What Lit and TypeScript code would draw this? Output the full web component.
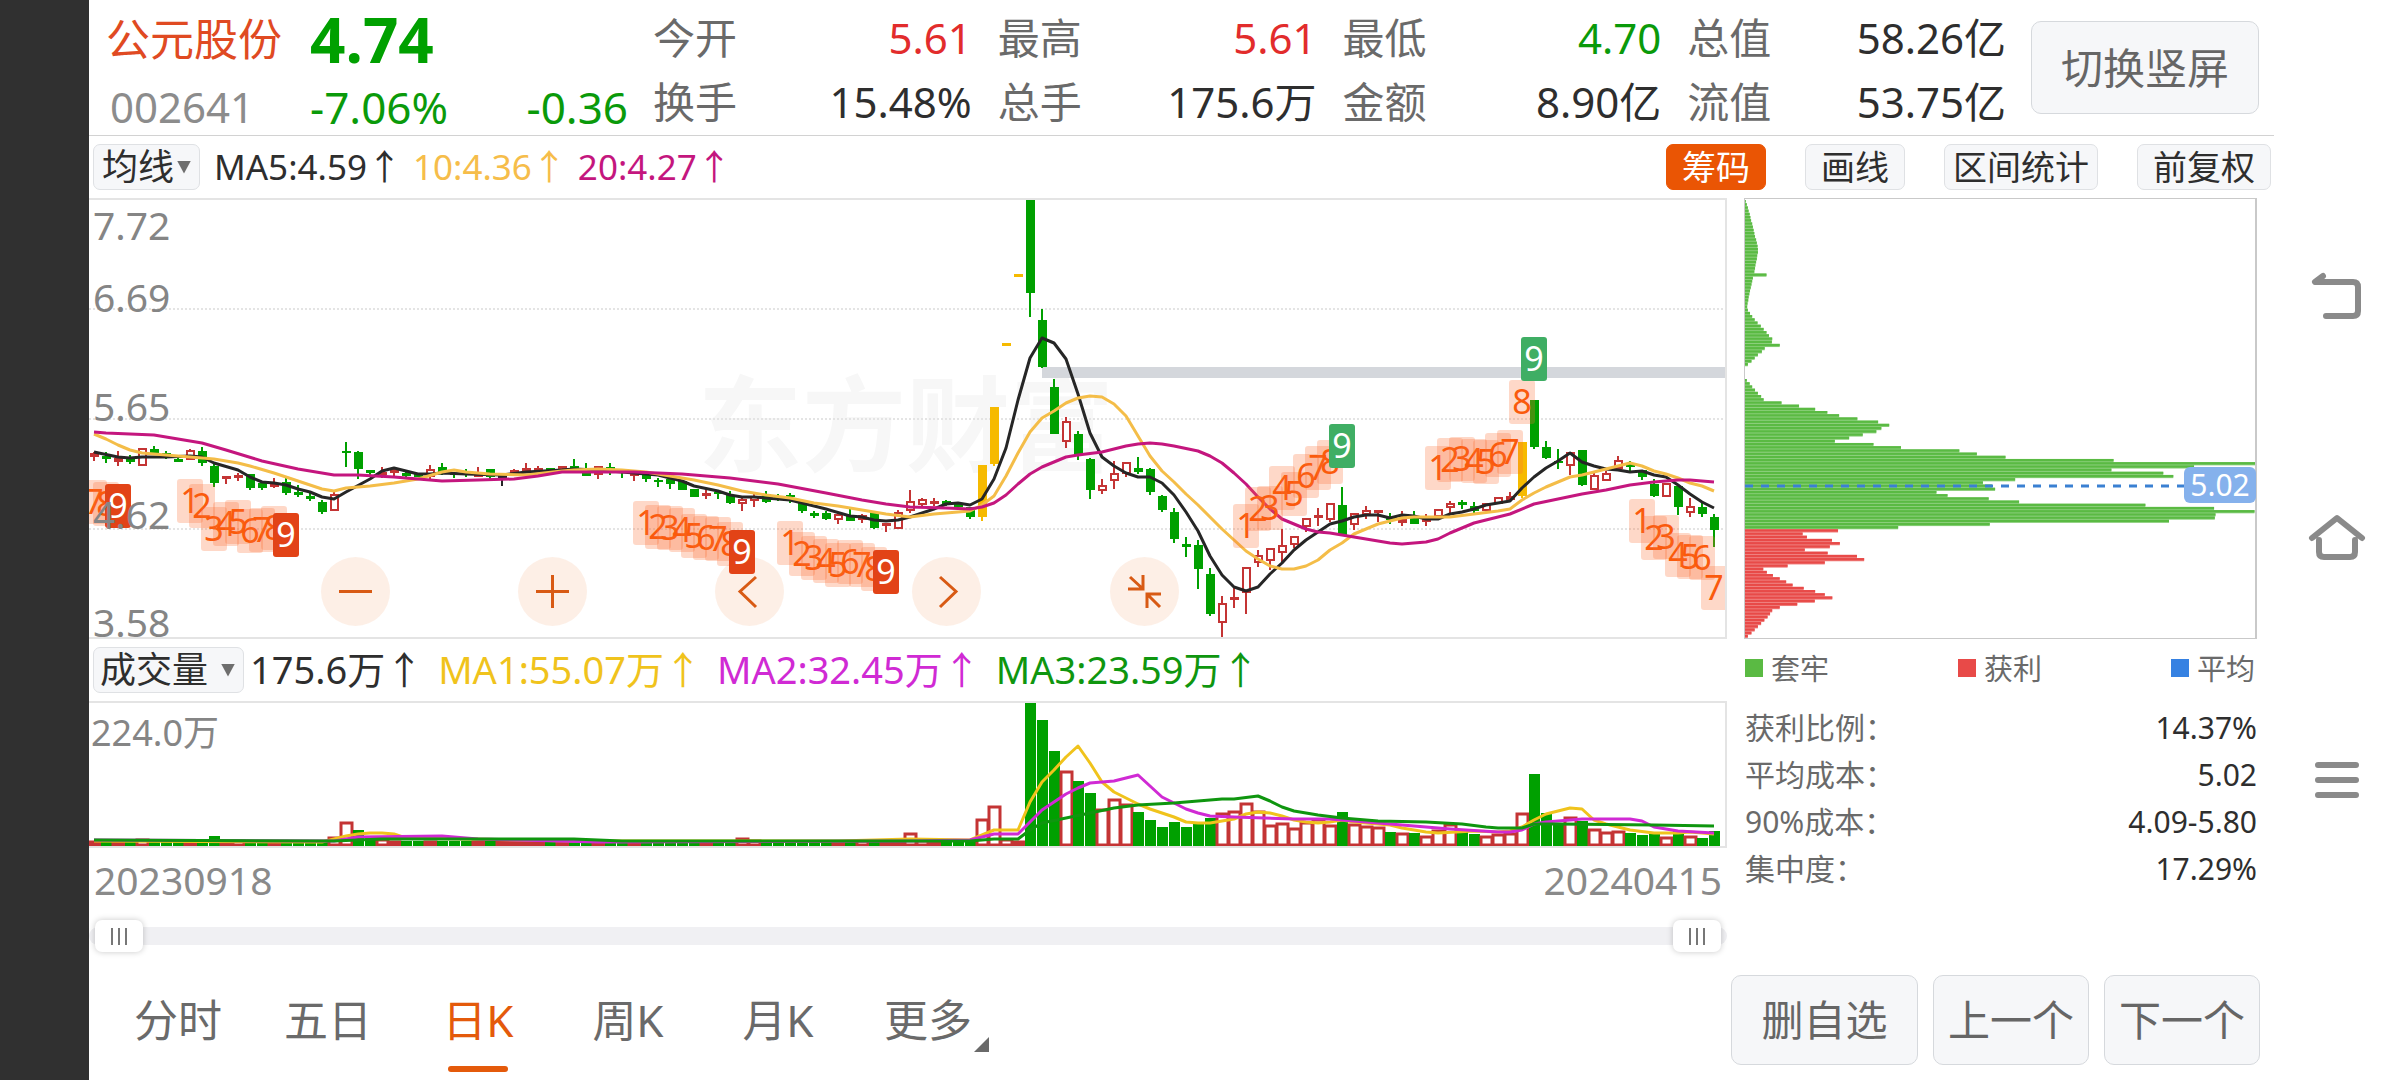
import { LitElement, html, svg, css } from "lit";
import { customElement, state } from "lit/decorators.js";

/* ---------- data ---------- */

type Kind = "g" | "r" | "y" | "k";
/** kind, body top, body bottom, high, low (chart units) */
type Candle = [Kind, number, number, number, number];
type Point = [number, number];

const FIRST_X = 94;
const PITCH = 12;
const cx = (i: number) => FIRST_X + PITCH * i;

const CANDLES: Candle[] = [
  ["r", 453, 457, 452, 461], ["g", 456, 459, 452, 463], ["r", 458, 462, 451, 466], ["g", 459, 462, 455, 464],
  ["r", 448, 466, 448, 466], ["g", 449, 453, 446, 453], ["g", 454, 455, 451, 459], ["g", 459, 461, 458, 461],
  ["r", 450, 460, 449, 460], ["g", 451, 463, 447, 466], ["g", 466, 483, 463, 487], ["r", 476, 479, 476, 484],
  ["r", 475, 478, 473, 481], ["g", 474, 488, 474, 490], ["g", 483, 488, 482, 490], ["r", 483, 487, 478, 488],
  ["g", 482, 493, 478, 495], ["g", 492, 495, 485, 497], ["g", 496, 499, 493, 501], ["g", 502, 512, 500, 514],
  ["r", 494, 511, 492, 511], ["g", 452, 453, 442, 467], ["g", 452, 469, 451, 479], ["g", 470, 472, 470, 475],
  ["r", 472, 475, 467, 478], ["r", 470, 473, 468, 476], ["g", 473, 475, 472, 478], ["g", 473, 477, 473, 477],
  ["r", 469, 477, 465, 479], ["g", 467, 473, 463, 475], ["g", 474, 475, 473, 478], ["g", 474, 475, 469, 477],
  ["r", 474, 476, 467, 477], ["g", 469, 477, 469, 479], ["k", 475, 477, 474, 486], ["r", 470, 474, 469, 475],
  ["r", 468, 470, 463, 471], ["r", 468, 471, 466, 472], ["g", 468, 471, 468, 471], ["r", 466, 469, 466, 470],
  ["g", 466, 468, 459, 468], ["g", 471, 476, 463, 476], ["r", 466, 475, 466, 479], ["g", 467, 473, 463, 475],
  ["g", 472, 473, 471, 478], ["r", 473, 476, 473, 481], ["g", 475, 479, 475, 482], ["g", 481, 482, 478, 487],
  ["g", 479, 484, 479, 489], ["g", 481, 490, 481, 490], ["g", 489, 497, 489, 497], ["r", 493, 495, 489, 499],
  ["g", 493, 494, 492, 499], ["g", 495, 503, 491, 504], ["r", 499, 504, 497, 511], ["r", 496, 501, 494, 507],
  ["g", 494, 502, 491, 503], ["g", 497, 498, 494, 501], ["g", 496, 497, 493, 503], ["g", 501, 511, 501, 513],
  ["g", 513, 515, 511, 518], ["g", 513, 519, 511, 520], ["r", 514, 520, 513, 524], ["g", 516, 521, 509, 521],
  ["r", 515, 520, 514, 523], ["g", 512, 528, 512, 529], ["r", 523, 526, 523, 532], ["r", 512, 529, 510, 529],
  ["r", 501, 511, 490, 513], ["r", 499, 505, 498, 507], ["r", 501, 504, 498, 506], ["g", 501, 504, 500, 506],
  ["g", 503, 507, 503, 507], ["g", 507, 517, 507, 519], ["y", 465, 517, 465, 521], ["y", 407, 464, 407, 466],
  ["y", 343, 346, 343, 346], ["y", 274, 277, 274, 277], ["g", 199, 293, 199, 317], ["g", 320, 367, 309, 368],
  ["g", 387, 434, 379, 434], ["r", 421, 442, 417, 448], ["g", 434, 455, 431, 460], ["g", 459, 490, 458, 499],
  ["r", 485, 491, 479, 494], ["r", 473, 481, 461, 489], ["r", 462, 474, 462, 477], ["g", 468, 472, 457, 474],
  ["g", 469, 492, 468, 495], ["g", 496, 510, 495, 512], ["g", 512, 539, 508, 543], ["g", 544, 547, 537, 557],
  ["g", 545, 569, 540, 589], ["g", 574, 614, 568, 616], ["r", 603, 623, 596, 637], ["r", 597, 599, 587, 608],
  ["r", 567, 593, 567, 614], ["r", 555, 563, 550, 567], ["r", 548, 561, 548, 570], ["r", 545, 553, 529, 562],
  ["r", 536, 545, 536, 548], ["r", 518, 527, 518, 532], ["r", 515, 517, 508, 526], ["r", 503, 520, 503, 522],
  ["g", 505, 535, 487, 535], ["r", 513, 525, 513, 530], ["r", 510, 515, 506, 519], ["r", 510, 513, 510, 522],
  ["g", 517, 519, 513, 524], ["r", 519, 523, 511, 526], ["g", 518, 524, 511, 524], ["r", 519, 522, 514, 526],
  ["r", 509, 517, 509, 517], ["r", 503, 508, 501, 514], ["g", 502, 504, 500, 509], ["g", 506, 511, 502, 515],
  ["r", 503, 511, 503, 511], ["r", 497, 504, 497, 504], ["r", 496, 500, 492, 500], ["y", 442, 496, 442, 498],
  ["g", 400, 447, 400, 449], ["g", 447, 458, 441, 459], ["g", 462, 463, 449, 469], ["r", 452, 466, 452, 475],
  ["g", 450, 485, 450, 486], ["r", 475, 490, 473, 490], ["r", 473, 481, 471, 481], ["r", 460, 469, 456, 469],
  ["g", 464, 466, 461, 471], ["g", 470, 477, 470, 480], ["g", 484, 496, 479, 497], ["r", 483, 497, 483, 497],
  ["g", 486, 507, 486, 515], ["r", 506, 513, 498, 517], ["g", 507, 514, 503, 517], ["g", 517, 530, 514, 547],
];

const MA5: Point[] = [
  [0, 452], [2, 457], [3, 458], [4, 457], [6, 457], [8, 456], [9, 457], [10, 463], [12, 470], [13, 477], [14, 482],
  [15, 483], [16, 485], [17, 489], [18, 492], [19, 497], [20, 499], [21, 492], [23, 479], [24, 471], [25, 468],
  [26, 471], [27, 474], [28, 474], [29, 473], [31, 474], [34, 475], [36, 472], [39, 470], [40, 469], [42, 470],
  [45, 473], [47, 475], [49, 481], [50, 486], [52, 491], [53, 495], [54, 497], [55, 497], [56, 498], [57, 499],
  [58, 500], [59, 503], [61, 509], [63, 516], [64, 517], [65, 520], [66, 521], [67, 520], [68, 517], [70, 509],
  [71, 504], [72, 503], [73, 505], [74, 499], [75, 479], [76, 448], [77, 400], [78, 358], [79, 338], [80, 343],
  [81, 359], [82, 394], [83, 433], [84, 457], [85, 466], [86, 473], [87, 477], [88, 477], [89, 483], [90, 495],
  [91, 512], [92, 531], [93, 556], [94, 575], [95, 587], [96, 591], [97, 587], [98, 574], [99, 563], [100, 550],
  [101, 540], [102, 532], [103, 524], [104, 521], [105, 517], [106, 515], [107, 515], [108, 518], [109, 515],
  [110, 516], [111, 519], [112, 519], [113, 514], [114, 512], [115, 509], [116, 505], [117, 503], [118, 501],
  [119, 488], [120, 477], [121, 468], [122, 461], [123, 453], [124, 462], [125, 466], [126, 469], [127, 470],
  [128, 472], [129, 471], [130, 475], [131, 477], [132, 485], [133, 494], [134, 502], [135, 508],
];
const MA10: Point[] = [
  [0, 434], [1, 439], [2, 445], [3, 450], [4, 453], [5, 454], [8, 457], [10, 459], [12, 463], [13, 466], [15, 473],
  [17, 481], [19, 489], [20, 491], [21, 488], [23, 486], [25, 483], [27, 479], [29, 472], [30, 470], [31, 472],
  [33, 474], [36, 475], [39, 471], [40, 470], [42, 469], [44, 470], [46, 472], [48, 476], [50, 480], [52, 485],
  [54, 491], [56, 495], [58, 498], [60, 503], [62, 506], [64, 510], [66, 514], [68, 517], [70, 514], [72, 512],
  [73, 511], [74, 505], [75, 496], [76, 476], [77, 453], [78, 432], [79, 418], [80, 411], [81, 403], [82, 398],
  [83, 396], [84, 397], [85, 404], [86, 416], [87, 436], [88, 456], [89, 471], [90, 482], [91, 494], [92, 505],
  [93, 517], [94, 529], [95, 540], [96, 551], [97, 559], [98, 566], [99, 569], [100, 569], [101, 566], [102, 560],
  [103, 550], [104, 543], [105, 534], [106, 529], [107, 524], [108, 521], [109, 518], [110, 517], [113, 517],
  [115, 514], [117, 511], [118, 509], [119, 500], [120, 493], [121, 487], [122, 482], [123, 477], [124, 475],
  [126, 469], [128, 463], [129, 466], [130, 471], [131, 474], [132, 478], [133, 483], [134, 486], [135, 491],
];
const MA20: Point[] = [
  [0, 432], [1, 433], [3, 434], [5, 435], [7, 439], [9, 443], [11, 450], [14, 461], [17, 469], [20, 475], [22, 475],
  [25, 477], [29, 481], [32, 480], [35, 479], [37, 476], [39, 472], [45, 472], [49, 474], [53, 478], [57, 484],
  [61, 493], [64, 500], [66, 504], [68, 507], [71, 508], [73, 509], [74, 507], [75, 503], [76, 495], [77, 484],
  [78, 474], [79, 467], [81, 457], [82, 455], [84, 452], [86, 446], [87, 444], [88, 443], [89, 444], [90, 446],
  [92, 451], [93, 456], [94, 463], [95, 473], [96, 484], [97, 497], [98, 509], [99, 519], [100, 524], [101, 529],
  [102, 532], [103, 533], [104, 535], [105, 537], [107, 541], [108, 543], [109, 544], [111, 542], [112, 539],
  [113, 533], [115, 523], [116, 520], [118, 514], [120, 504], [122, 499], [124, 494], [126, 490], [128, 485],
  [130, 482], [132, 480], [133, 480], [135, 482],
];

/** Nine-turn counts: first candle, first digit, top of each badge, colour of a closing nine */
const TURNS: { start: number; first: number; tops: number[]; nine: string }[] = [
  { start: 0, first: 7, tops: [480, 482, 484], nine: "hot" },
  { start: 8, first: 1, tops: [479, 484, 507, 502, 500, 509, 508, 506, 513], nine: "hot" },
  { start: 46, first: 1, tops: [501, 505, 506, 508, 514, 516, 517, 522, 530], nine: "hot" },
  { start: 58, first: 1, tops: [521, 532, 536, 539, 543, 540, 543, 547, 550], nine: "hot" },
  { start: 96, first: 1, tops: [504, 487, 486, 466, 472, 454, 446, 440, 424], nine: "cool" },
  { start: 112, first: 1, tops: [446, 438, 437, 439, 440, 433, 430, 380, 337], nine: "cool" },
  { start: 129, first: 1, tops: [499, 516, 515, 533, 535, 536, 566], nine: "hot" },
];

const VOL_EARLY: Record<number, number> = {
  4: 839, 10: 836, 12: 840, 20: 837, 21: 822, 22: 830, 23: 838, 24: 839, 54: 838, 55: 840, 64: 840, 68: 833, 69: 840,
};
const VOL_LATE = [
  819, 806, 839, 841, 702, 720, 751, 771, 781, 793, 809, 799, 804, 812, 820, 827, 822, 827, 824, 818, 813, 811, 803,
  811, 825, 823, 828, 822, 819, 825, 812, 824, 826, 827, 832, 833, 833, 836, 830, 824, 832, 834, 836, 834, 833, 813,
  774, 813, 823, 817, 821, 829, 832, 831, 833, 835, 834, 837, 830, 836, 838, 831,
];
const volTop = (i: number) => (i >= 74 ? VOL_LATE[i - 74] : VOL_EARLY[i] ?? 841);

/** Days whose volume bar is rising although the candle closed below its open */
const RISING = new Set([21]);

const VMA1: Point[] = [
  [0, 841], [19, 842], [20, 839], [21, 836], [22, 834], [23, 833], [24, 833], [25, 834], [26, 838], [40, 841],
  [62, 841], [68, 839], [73, 840], [75, 830], [77, 830], [78, 802], [79, 782], [80, 770], [81, 757], [82, 746],
  [83, 763], [84, 782], [85, 792], [86, 798], [87, 804], [88, 809], [89, 813], [90, 817], [91, 822], [92, 823],
  [93, 823], [94, 821], [95, 819], [96, 814], [97, 812], [98, 813], [99, 816], [100, 820], [101, 822], [102, 823],
  [103, 822], [104, 820], [105, 822], [108, 825], [109, 828], [111, 832], [112, 833], [115, 831], [117, 832],
  [118, 831], [119, 827], [120, 820], [121, 814], [122, 811], [123, 808], [124, 809], [125, 820], [126, 824],
  [128, 830], [130, 833], [132, 833], [133, 832], [135, 834],
];
const VMA2: Point[] = [
  [0, 840], [20, 841], [22, 837], [29, 836], [30, 837], [32, 839], [42, 842], [68, 841], [73, 840], [75, 834],
  [77, 834], [78, 822], [79, 810], [80, 802], [81, 794], [82, 788], [83, 783], [85, 781], [87, 775], [88, 786],
  [89, 797], [90, 803], [91, 809], [92, 813], [93, 816], [95, 817], [100, 819], [103, 819], [106, 822], [110, 826],
  [113, 829], [117, 832], [118, 832], [119, 830], [120, 824], [121, 822], [124, 819], [128, 819], [129, 821],
  [130, 827], [132, 831], [135, 833],
];
const VMA3: Point[] = [
  [0, 840], [20, 841], [24, 839], [40, 839], [44, 841], [73, 841], [75, 839], [77, 839], [78, 830], [79, 823],
  [81, 818], [83, 813], [85, 808], [87, 805], [90, 803], [92, 801], [94, 799], [95, 799], [97, 796], [98, 801],
  [99, 807], [100, 811], [102, 815], [104, 818], [107, 821], [111, 822], [114, 824], [116, 827], [117, 828],
  [119, 828], [120, 824], [122, 824], [130, 825], [135, 826],
];

/** Share of the widest price level, from the highest price to the lowest */
const CHIPS = [
  2, 5, 8, 10, 13, 15, 17, 20, 22, 24, 26, 28, 31, 33, 35, 36, 36, 34, 33, 31, 29, 28, 26, 60, 22, 20, 18, 16, 14, 12,
  10, 9, 7, 6, 8, 14, 20, 27, 35, 44, 52, 60, 67, 76, 75, 97, 55, 47, 36, 27, 18, 8, 0, 0, 0, 0, 5, 13, 20, 28, 36, 45,
  52, 102, 151, 196, 230, 263, 314, 372, 403, 381, 367, 329, 291, 251, 359, 436, 599, 648, 728, 1030, 1431, 1255, 1024,
  1169, 1197, 755, 665, 690, 699, 535, 566, 681, 766, 1119, 1311, 1424, 1315, 1313, 1185, 684, 428, 260, 161, 173, 243,
  265, 237, 167, 231, 313, 333, 223, 119, 51, 61, 78, 97, 115, 133, 164, 196, 223, 244, 195, 146, 97, 76, 70, 63, 54,
  45, 36, 27, 18, 8,
];
const FIRST_PROFIT = 103;

const line = (pts: Point[]) => pts.map(([i, y]) => `${cx(i)},${y}`).join(" ");

/* ---------- shared styles ---------- */

const base = css`
  *,
  *::before,
  *::after {
    box-sizing: border-box;
  }
  :host {
    display: block;
    font-family: "Noto Sans", "Noto Sans CJK SC", sans-serif;
  }
  svg {
    display: block;
  }
  button,
  select {
    font: inherit;
    color: inherit;
    margin: 0;
    padding: 0;
    border: 0;
    background: none;
    cursor: pointer;
  }
`;

/* ---------- candle chart ---------- */

const VIEW = { x: 89, y: 200, w: 1636, h: 437 };

@customElement("kline-chart")
export class KlineChart extends LitElement {
  static styles = [
    base,
    css`
      .box {
        position: relative;
        height: 441px;
        border: 2px solid #e4e4e4;
        border-left: 0;
        overflow: hidden;
      }
      .layer {
        position: absolute;
        inset: 0;
        width: 100%;
        height: 100%;
      }
      .mark {
        display: flex;
        align-items: center;
        justify-content: center;
        padding-right: 2px;
        font: 700 104px/1 "Noto Sans CJK SC", sans-serif;
        color: #f7f7f7;
      }
      .grid {
        stroke: #e4e4e4;
        stroke-width: 2;
        stroke-dasharray: 2 2;
      }
      .gap {
        fill: #d4d7dc;
      }
      .g {
        fill: #00a000;
        stroke: #00a000;
      }
      .r {
        fill: #fff;
        stroke: #c43434;
      }
      .y {
        fill: #f6ba00;
        stroke: #f6ba00;
      }
      .k {
        fill: #262626;
        stroke: #262626;
      }
      .wick {
        stroke-width: 2;
      }
      .body {
        stroke-width: 2;
      }
      .ma {
        fill: none;
        stroke-width: 3;
        stroke-linejoin: round;
      }
      .ma5 {
        stroke: #262626;
      }
      .ma10 {
        stroke: #f4bd48;
      }
      .ma20 {
        stroke: #c4167e;
      }
      .turn {
        position: absolute;
        width: 26px;
        height: 44px;
        margin-left: -13px;
        border-radius: 3px;
        font-size: 34px;
        line-height: 43px;
        text-align: center;
        display: flex;
        justify-content: center;
        color: #fa5a0c;
        background: rgba(252, 110, 50, 0.27);
      }
      .hot {
        color: #fff;
        background: #e24317;
      }
      .cool {
        color: #fff;
        background: #3fae64;
      }
      .axis {
        display: grid;
        grid-template-rows: repeat(4, 1fr);
        padding: 4px 0 0 4px;
        font-size: 39px;
        line-height: 30px;
        color: #858585;
      }
      .band {
        display: flex;
        flex-direction: column;
        justify-content: flex-end;
      }
      .first {
        justify-content: space-between;
        padding-top: 6px;
      }
      .tools {
        position: absolute;
        left: 14.2%;
        right: 33.4%;
        bottom: 11px;
        display: flex;
        justify-content: space-between;
      }
      .tool {
        width: 69px;
        height: 69px;
        border-radius: 50%;
        background: rgba(253, 236, 226, 0.85);
      }
      .tool svg {
        width: 69px;
        height: 69px;
        fill: none;
        stroke: #d85a14;
        stroke-width: 3;
      }
    `,
  ];

  private candle([k, top, bottom, high, low]: Candle, i: number) {
    const x = cx(i);
    const thin = bottom - top < 2;
    return svg`<g class=${k}>
      ${high < top ? svg`<line class="wick" x1=${x} x2=${x} y1=${high} y2=${top} />` : ""}
      ${low > bottom ? svg`<line class="wick" x1=${x} x2=${x} y1=${bottom} y2=${low} />` : ""}
      ${thin
        ? svg`<line class="wick" x1=${x - 4} x2=${x + 5} y1=${top} y2=${top} />`
        : svg`<rect class="body" x=${x - 3} y=${top + 1} width="7" height=${Math.max(1, bottom - top - 2)} />`}
    </g>`;
  }

  private badges() {
    return TURNS.flatMap(({ start, first, tops, nine }) =>
      tops.map((top, n) => {
        const digit = first + n;
        const left = ((cx(start + n) - VIEW.x) / VIEW.w) * 100;
        const y = ((top - VIEW.y) / VIEW.h) * 100;
        return html`<span class="turn ${digit === 9 ? nine : ""}" style="left:${left}%;top:${y}%">${digit}</span>`;
      })
    );
  }

  render() {
    const icons: [string, string][] = [
      ["缩小", "M18 34.5H51"],
      ["放大", "M18 34.5H51M34.5 18V51"],
      ["左移", "M41 20L25 34.5L41 50"],
      ["右移", "M28 20L44 34.5L28 50"],
      ["收起", "M33 18V32H18M20 20L33 32M51 37H37V51M37 37L50 50"],
    ];
    return html`<div class="box">
      <div class="layer mark" aria-hidden="true">东方财富</div>
      <svg class="layer" viewBox="${VIEW.x} ${VIEW.y} ${VIEW.w} ${VIEW.h}" preserveAspectRatio="none">
        ${[309, 419, 529].map((y) => svg`<line class="grid" x1="89" x2="1725" y1=${y} y2=${y} />`)}
        <rect class="gap" x="1042" y="367" width="684" height="11" />
        ${CANDLES.map((c, i) => this.candle(c, i))}
        <polyline class="ma ma5" points=${line(MA5)} />
        <polyline class="ma ma10" points=${line(MA10)} />
        <polyline class="ma ma20" points=${line(MA20)} />
      </svg>
      <div class="tools">
        ${icons.map(
          ([name, d]) => html`<button class="tool" aria-label=${name}>
            <svg viewBox="0 0 69 69"><path d=${d} /></svg>
          </button>`
        )}
      </div>
      <div class="layer" style="pointer-events:none">${this.badges()}</div>
      <div class="layer axis" style="pointer-events:none">
        <div class="band first"><span>7.72</span><span>6.69</span></div>
        <div class="band">5.65</div>
        <div class="band">4.62</div>
        <div class="band">3.58</div>
      </div>
    </div>`;
  }
}

/* ---------- volume chart ---------- */

@customElement("volume-chart")
export class VolumeChart extends LitElement {
  static styles = [
    base,
    css`
      .box {
        position: relative;
        height: 147px;
        border: 2px solid #e4e4e4;
        border-left: 0;
        overflow: hidden;
      }
      .plot {
        position: absolute;
        inset: 0;
        width: 100%;
        height: 100%;
      }
      .g {
        fill: #00a000;
      }
      .r {
        fill: #fff;
        stroke: #c43434;
        stroke-width: 3;
      }
      .ma {
        fill: none;
        stroke-width: 3;
        stroke-linejoin: round;
      }
      .v1 {
        stroke: #f0c31c;
      }
      .v2 {
        stroke: #d02ad4;
      }
      .v3 {
        stroke: #0f960f;
      }
      .peak {
        padding: 6px 0 0 2px;
        font-size: 36px;
        line-height: 48px;
        color: #858585;
        position: relative;
      }
    `,
  ];

  render() {
    return html`<div class="box">
      <svg class="plot" viewBox="89 703 1636 143" preserveAspectRatio="none">
        ${CANDLES.map(([k], i) => {
          const top = volTop(i);
          return k === "g" && !RISING.has(i)
            ? svg`<rect class="g" x=${cx(i) - 5} y=${top} width="11" height=${846 - top} />`
            : svg`<rect class="r" x=${cx(i) - 5} y=${top + 1} width="11" height=${844 - top} />`;
        })}
        <polyline class="ma v1" points=${line(VMA1)} />
        <polyline class="ma v2" points=${line(VMA2)} />
        <polyline class="ma v3" points=${line(VMA3)} />
      </svg>
      <div class="peak">224.0万</div>
    </div>`;
  }
}

/* ---------- chip distribution ---------- */

@customElement("chip-chart")
export class ChipChart extends LitElement {
  static styles = [
    base,
    css`
      .box {
        position: relative;
        height: 441px;
        border: 1px solid #c9c9c9;
        border-right-width: 2px;
      }
      .plot {
        position: absolute;
        inset: 0;
        width: 100%;
        height: 100%;
      }
      .loss {
        fill: #5aba43;
      }
      .gain {
        fill: #e84a48;
      }
      .avg {
        stroke: #3a80d2;
        stroke-width: 3;
        stroke-dasharray: 8 8;
      }
      .tag {
        position: absolute;
        right: -1px;
        top: 61%;
        width: 72px;
        height: 36px;
        border-radius: 6px;
        background: #85b1ec;
        color: #fff;
        font-size: 30px;
        line-height: 36px;
        text-align: center;
      }
    `,
  ];

  render() {
    const step = 438 / 137;
    return html`<div class="box">
      <svg class="plot" viewBox="0 0 510 439" preserveAspectRatio="none">
        ${CHIPS.map((v, i) => {
          const kind = i >= FIRST_PROFIT ? "gain" : "loss";
          const w = v * (512 / 1431);
          return svg`<rect class=${kind} opacity="0.7" x="0" y=${1 + i * step} width=${w} height=${step} />
            <rect class=${kind} x="0" y=${1 + i * step} width=${w} height=${step * 0.72} />`;
        })}
        <line class="avg" x1="0" x2="440" y1="287" y2="287" />
      </svg>
      <span class="tag">5.02</span>
    </div>`;
  }
}

/* ---------- page ---------- */

@customElement("app-root")
export class AppRoot extends LitElement {
  static styles = [
    base,
    css`
      .screen {
        display: grid;
        grid-template-columns: 89px minmax(0, 1fr) 126px;
        min-height: 100vh;
        background: #fff;
        color: #2e2e2e;
      }
      .notch {
        background: #303030;
      }
      .row {
        display: flex;
        align-items: center;
      }

      /* quote header */
      .head {
        display: flex;
        align-items: center;
        height: 136px;
        padding: 0 15px 0 17px;
        border-bottom: 1px solid #d2d2d2;
      }
      .quote {
        display: grid;
        grid-template-columns: 204px 318px;
        grid-template-rows: 78px 57px;
        align-items: center;
        line-height: 1;
        color: #0a9a0a;
      }
      .name {
        font-size: 44px;
        color: #e04a22;
      }
      .code {
        font-size: 42px;
        padding-left: 4px;
        color: #8c8c8c;
      }
      .price {
        font-size: 62px;
        line-height: 78px;
        font-weight: 700;
        color: #00a000;
      }
      .change {
        display: flex;
        justify-content: space-between;
        font-size: 44px;
      }
      .stats {
        flex: 1;
        display: grid;
        grid-template-columns: repeat(4, 1fr);
        grid-template-rows: 64px 64px;
        column-gap: 26px;
        margin: 0 25px;
        padding-top: 4px;
        font-size: 42px;
      }
      .stat {
        display: flex;
        justify-content: space-between;
        align-items: center;
        line-height: 1;
      }
      .label {
        color: #6a6a6a;
      }
      .up {
        color: #e22c2c;
      }
      .down {
        color: #0a9a0a;
      }
      .btn {
        border: 1px solid #d6d9dd;
        border-radius: 10px;
        background: #f6f7f9;
        font-size: 42px;
        line-height: 1;
        color: #666;
        white-space: nowrap;
      }
      .rotate {
        width: 228px;
        height: 93px;
      }

      /* indicator bar */
      .bar {
        height: 62px;
        padding-left: 4px;
        line-height: 1;
        white-space: nowrap;
      }
      .pick {
        display: flex;
        align-items: center;
        height: 46px;
        border: 1px solid #dfe1e4;
        border-radius: 7px;
        background: #f6f7f9;
        font-size: 36px;
      }
      .pick select {
        appearance: none;
        line-height: 42px;
        height: 42px;
        outline: 0;
      }
      .caret {
        width: 14px;
        height: 13px;
        background: #6e6e6e;
        clip-path: polygon(0 0, 100% 0, 50% 100%);
        pointer-events: none;
      }
      .pick-ma {
        padding: 0 8px;
        gap: 2px;
        margin-right: 14px;
      }
      .pick-vol {
        padding: 0 8px 0 6px;
        gap: 12px;
        margin-right: 6px;
      }
      .averages {
        display: flex;
        gap: 11px;
        padding-bottom: 3px;
        font-size: 35px;
      }
      .volumes {
        gap: 15px;
        font-size: 38px;
      }
      .arrow {
        font-family: "Noto Sans CJK SC", sans-serif;
      }
      .c-yellow {
        color: #f6bd4a;
      }
      .c-pink {
        color: #c4167e;
      }
      .c-gold {
        color: #f0c31c;
      }
      .c-violet {
        color: #d02ad4;
      }
      .c-green {
        color: #0f960f;
      }
      .modes {
        margin-left: auto;
        padding-right: 3px;
        display: flex;
        gap: 39px;
      }
      .mode {
        height: 46px;
        padding: 0 15px;
        border: 1px solid #dfe1e4;
        border-radius: 7px;
        background: #f6f7f9;
        font-size: 34px;
        line-height: 1;
      }
      .mode.wide {
        padding: 0 8px;
      }
      .mode.on {
        border-color: #ea5504;
        background: #ea5504;
        color: #fff;
      }

      /* charts */
      .columns {
        display: grid;
        grid-template-columns: minmax(0, 1638fr) minmax(0, 513fr);
        column-gap: 17px;
        padding-right: 17px;
      }
      .dates {
        display: flex;
        justify-content: space-between;
        align-items: center;
        height: 66px;
        padding: 0 5px 4px;
        font-size: 39px;
        line-height: 1;
        color: #8a8a8a;
      }
      .range {
        position: relative;
        height: 44px;
        display: flex;
        align-items: center;
      }
      .track {
        flex: 1;
        height: 18px;
        border-radius: 9px;
        background: #f0f0f3;
      }
      .range input {
        position: absolute;
        inset: 0 6px;
        width: calc(100% - 12px);
        height: 44px;
        margin: 0;
        appearance: none;
        background: none;
        pointer-events: none;
      }
      .range input::-webkit-slider-thumb {
        appearance: none;
        pointer-events: auto;
        width: 48px;
        height: 32px;
        border-radius: 7px;
        border: 0;
        background:
          linear-gradient(#777, #777) 16px center / 2px 17px no-repeat,
          linear-gradient(#777, #777) 23px center / 2px 17px no-repeat,
          linear-gradient(#777, #777) 30px center / 2px 17px no-repeat,
          #fff;
        box-shadow: 0 0 6px rgba(0, 0, 0, 0.22);
      }

      /* chip panel */
      .legend {
        display: flex;
        justify-content: space-between;
        align-items: center;
        height: 60px;
        padding: 0 2px 2px 1px;
        font-size: 29px;
        line-height: 1;
        color: #6a6a6a;
      }
      .key {
        display: flex;
        align-items: center;
        gap: 8px;
      }
      .swatch {
        width: 18px;
        height: 18px;
      }
      .s-green {
        background: #5aba43;
      }
      .s-red {
        background: #e84a48;
      }
      .s-blue {
        background: #3581e2;
      }
      .facts {
        width: 100%;
        margin-top: 5px;
        border-collapse: collapse;
        font-size: 30px;
        line-height: 47px;
      }
      .facts th {
        padding: 0 0 0 1px;
        font-weight: 400;
        text-align: left;
        color: #6a6a6a;
      }
      .facts td {
        padding: 0;
        text-align: right;
      }

      /* footer */
      .foot {
        display: flex;
        align-items: center;
        height: 122px;
        padding: 2px 14px 0;
      }
      .tab {
        position: relative;
        width: 150px;
        height: 104px;
        font-size: 44px;
        line-height: 1;
        color: #6a6a6a;
      }
      .tab.on {
        color: #e45a0b;
      }
      .tab.on::after {
        content: "";
        position: absolute;
        left: 45px;
        bottom: 0;
        width: 60px;
        height: 6px;
        border-radius: 3px;
        background: #e45a0b;
      }
      .tab.more::after {
        content: "";
        position: absolute;
        right: 14px;
        bottom: 20px;
        width: 15px;
        height: 15px;
        background: #6a6a6a;
        clip-path: polygon(100% 0, 100% 100%, 0 100%);
      }
      .actions {
        margin-left: auto;
        display: flex;
        gap: 15px;
      }
      .actions .btn {
        width: 156px;
        height: 90px;
      }
      .actions .btn:first-child {
        width: 187px;
      }

      /* system navigation */
      .nav {
        display: flex;
        flex-direction: column;
        align-items: center;
        justify-content: center;
        gap: 176px;
      }
      .nav svg {
        width: 64px;
        height: 64px;
        fill: none;
        stroke: #8a8a8a;
        stroke-width: 6;
        stroke-linecap: round;
        stroke-linejoin: round;
      }
    `,
  ];

  @state() private tab = "日K";

  private stats = [
    ["今开", "5.61", "up"], ["最高", "5.61", "up"], ["最低", "4.70", "down"], ["总值", "58.26亿", ""],
    ["换手", "15.48%", ""], ["总手", "175.6万", ""], ["金额", "8.90亿", ""], ["流值", "53.75亿", ""],
  ];

  private reading(text: string, tone = "") {
    return html`<span class=${tone}>${text}<span class="arrow">↑</span></span>`;
  }

  render() {
    return html`<div class="screen">
      <div class="notch"></div>
      <main>
        <header class="head">
          <div class="quote">
            <span class="name">公元股份</span><span class="price">4.74</span>
            <span class="code">002641</span>
            <span class="change"><span>-7.06%</span><span>-0.36</span></span>
          </div>
          <div class="stats">
            ${this.stats.map(
              ([k, v, tone]) => html`<div class="stat"><span class="label">${k}</span><span class=${tone}>${v}</span></div>`
            )}
          </div>
          <button class="btn rotate">切换竖屏</button>
        </header>

        <div class="row bar">
          <label class="pick pick-ma">
            <select aria-label="主图指标"><option>均线</option></select><span class="caret"></span>
          </label>
          <div class="averages">
            ${this.reading("MA5:4.59")}${this.reading("10:4.36", "c-yellow")}${this.reading("20:4.27", "c-pink")}
          </div>
          <div class="modes">
            <button class="mode on">筹码</button>
            <button class="mode">画线</button>
            <button class="mode wide">区间统计</button>
            <button class="mode">前复权</button>
          </div>
        </div>

        <div class="columns">
          <section>
            <kline-chart></kline-chart>
            <div class="row bar">
              <label class="pick pick-vol">
                <select aria-label="副图指标"><option>成交量</option></select><span class="caret"></span>
              </label>
              <div class="averages volumes">
                ${this.reading("175.6万")}${this.reading("MA1:55.07万", "c-gold")}
                ${this.reading("MA2:32.45万", "c-violet")}${this.reading("MA3:23.59万", "c-green")}
              </div>
            </div>
            <volume-chart></volume-chart>
            <div class="dates"><span>20230918</span><span>20240415</span></div>
            <div class="range">
              <div class="track"></div>
              <input type="range" min="0" max="100" value="0" aria-label="开始日期" />
              <input type="range" min="0" max="100" value="100" aria-label="结束日期" />
            </div>
          </section>

          <aside>
            <chip-chart></chip-chart>
            <div class="legend">
              <span class="key"><i class="swatch s-green"></i>套牢</span>
              <span class="key"><i class="swatch s-red"></i>获利</span>
              <span class="key"><i class="swatch s-blue"></i>平均</span>
            </div>
            <table class="facts">
              <tr><th scope="row">获利比例：</th><td>14.37%</td></tr>
              <tr><th scope="row">平均成本：</th><td>5.02</td></tr>
              <tr><th scope="row">90%成本：</th><td>4.09-5.80</td></tr>
              <tr><th scope="row">集中度：</th><td>17.29%</td></tr>
            </table>
          </aside>
        </div>

        <footer class="foot">
          ${["分时", "五日", "日K", "周K", "月K", "更多"].map(
            (t) => html`<button
              class="tab ${t === this.tab ? "on" : t === "更多" ? "more" : ""}"
              @click=${() => (this.tab = t)}
            >${t}</button>`
          )}
          <div class="actions">
            <button class="btn">删自选</button>
            <button class="btn">上一个</button>
            <button class="btn">下一个</button>
          </div>
        </footer>
      </main>
      <nav class="nav">
        <button aria-label="返回">
          <svg viewBox="0 0 64 64"><path d="M18 8L10 14H48Q53 14 53 19V43Q53 48 48 48H21" /></svg>
        </button>
        <button aria-label="主页">
          <svg viewBox="0 0 64 64"><path d="M7 30L32 10L57 30M14 32V44Q14 49 19 49H45Q50 49 50 44V32" /></svg>
        </button>
        <button aria-label="最近任务">
          <svg viewBox="0 0 64 64"><path d="M13 17H51M13 32H51M13 47H51" /></svg>
        </button>
      </nav>
    </div>`;
  }
}
